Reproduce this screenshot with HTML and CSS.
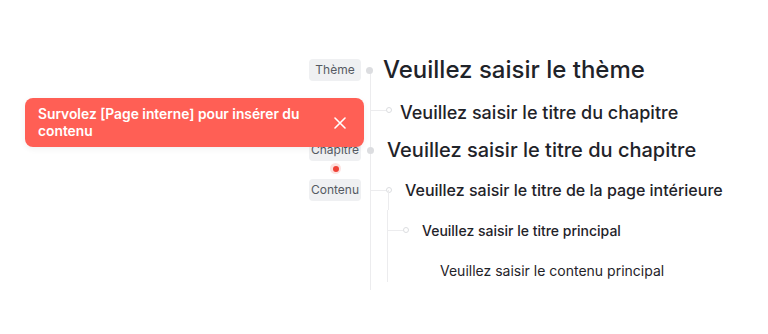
FILE: index.html
```html
<!DOCTYPE html>
<html lang="fr">
<head>
<meta charset="utf-8">
<link rel="stylesheet" href="styles.css">
</head>
<body>
<div class="map">
  <div class="row">
    <div class="label"><span class="tag">Thème</span></div>
    <div class="branch first">
      <span class="dot"></span>
      <span class="t t1">Veuillez saisir le thème</span>
    </div>
  </div>
  <div class="row">
    <div class="label"></div>
    <div class="branch">
      <span class="arm"></span><span class="ring"></span>
      <span class="t t2">Veuillez saisir le titre du chapitre</span>
    </div>
  </div>
  <div class="row">
    <div class="label"><span class="tag">Chapitre</span><span class="alert-dot"></span></div>
    <div class="branch">
      <span class="dot"></span>
      <span class="t t3">Veuillez saisir le titre du chapitre</span>
    </div>
  </div>
  <div class="row">
    <div class="label"><span class="tag">Contenu</span></div>
    <div class="branch">
      <span class="arm"></span><span class="ring"></span>
      <span class="sub"></span>
      <span class="t t4">Veuillez saisir le titre de la page intérieure</span>
    </div>
  </div>
  <div class="row">
    <div class="label"></div>
    <div class="branch">
      <div class="inner">
        <span class="arm"></span><span class="ring"></span>
        <span class="t t5">Veuillez saisir le titre principal</span>
      </div>
    </div>
  </div>
  <div class="row">
    <div class="label"></div>
    <div class="branch">
      <div class="inner last">
        <span class="t t6">Veuillez saisir le contenu principal</span>
      </div>
    </div>
  </div>
</div>

<div class="toast">
  <p class="toast-text">Survolez [Page interne] pour insérer du contenu</p>
  <svg class="close" width="12" height="12" viewBox="0 0 12 12"><path d="M1 1L11 11M11 1L1 11" stroke="#fff" stroke-width="1.6" stroke-linecap="round" fill="none"/></svg>
</div>
</body>
</html>
```
FILE: styles.css
```css
* { box-sizing: border-box; }
html, body { margin: 0; padding: 0; background: #fff; }
body {
  font-family: Inter, "Noto Sans", sans-serif;
  color: #1f2329;
  width: 768px;
  height: 334px;
  overflow: hidden;
  position: relative;
}
.map {
  display: flex;
  flex-direction: column;
  padding-top: 50px;
}
.row {
  display: flex;
  height: 40px;
}
.label {
  width: 370px;
  display: flex;
  justify-content: flex-end;
  align-items: center;
  padding-right: 9px;
  position: relative;
}
.tag {
  background: #eff0f2;
  color: #555a62;
  font-size: 12px;
  line-height: 22px;
  height: 22px;
  width: 52px;
  text-align: center;
  border-radius: 4px;
}
.alert-dot {
  position: absolute;
  right: 29px;
  top: 33px;
  width: 11px;
  height: 11px;
  border-radius: 50%;
  background: rgba(240, 68, 56, 0.16);
}
.alert-dot::after {
  content: "";
  position: absolute;
  left: 2.5px;
  top: 2.5px;
  width: 6px;
  height: 6px;
  border-radius: 50%;
  background: #ef4136;
}
.branch {
  flex: 1;
  display: flex;
  align-items: center;
  border-left: 1px solid #ececee;
  position: relative;
}
.branch.first {
  border-left: none;
}
.branch.first::before {
  content: "";
  position: absolute;
  left: 0;
  top: 20px;
  bottom: 0;
  border-left: 1px solid #ececee;
}
.dot {
  width: 7px;
  height: 7px;
  border-radius: 50%;
  background: #dcdde0;
  margin-left: -4px;
  position: relative;
}
.arm {
  width: 15px;
  border-top: 1px solid #ececee;
}
.ring {
  width: 6px;
  height: 6px;
  border-radius: 50%;
  border: 1px solid #dcdde0;
  background: #fff;
}
.sub {
  position: absolute;
  left: 17px;
  top: 20px;
  bottom: 0;
  border-left: 1px solid #ececee;
}
.inner {
  display: flex;
  align-items: center;
  height: 100%;
  margin-left: 16px;
  border-left: 1px solid #ececee;
}
.inner.last {
  align-self: flex-start;
  height: 32px;
}
.t { white-space: nowrap; }
.t1 { font-size: 24px; font-weight: 500; margin-left: 10px; margin-top: -1px; }
.t2 { font-size: 18px; font-weight: 500; margin-left: 8px; margin-top: 4px; }
.t3 { font-size: 20px; font-weight: 500; margin-left: 13px; }
.t4 { font-size: 16px; font-weight: 500; margin-left: 13px; }
.t5 { font-size: 14px; font-weight: 500; margin-left: 13px; }
.t6 { font-size: 14px; font-weight: 400; margin-left: 52px; position: relative; top: 4px; }
.toast {
  position: absolute;
  left: 25px;
  top: 98px;
  width: 339px;
  height: 49px;
  background: #ff5f55;
  border-radius: 8px;
  display: flex;
  align-items: center;
  padding: 0 15px 0 13px;
  box-shadow: 0 2px 6px rgba(0,0,0,0.06);
}
.toast-text {
  margin: 0;
  flex: 1;
  color: #fff;
  font-size: 13.8px;
  font-weight: 600;
  line-height: 17px;
  padding-right: 30px;
}
.close { flex: none; margin-right: 3px; }
```
